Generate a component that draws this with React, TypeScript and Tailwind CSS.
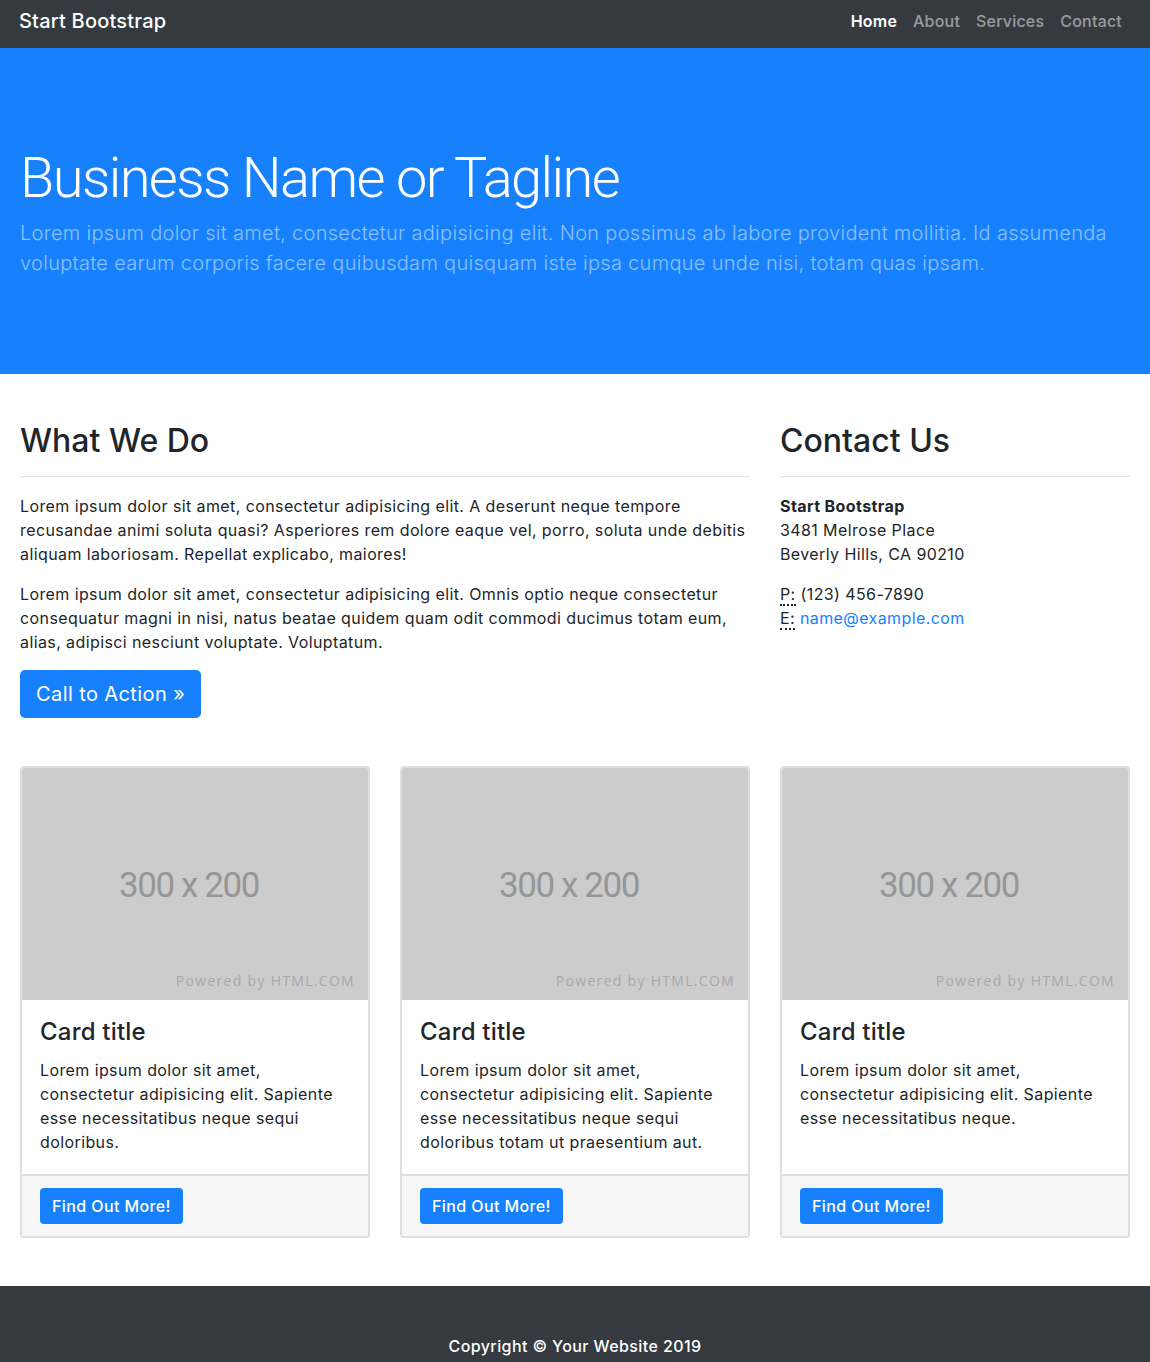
import { } from "react";

const font = { fontFamily: "Inter, 'Noto Sans', sans-serif" };

const cards = [
  "Lorem ipsum dolor sit amet, consectetur adipisicing elit. Sapiente esse necessitatibus neque sequi doloribus.",
  "Lorem ipsum dolor sit amet, consectetur adipisicing elit. Sapiente esse necessitatibus neque sequi doloribus totam ut praesentium aut.",
  "Lorem ipsum dolor sit amet, consectetur adipisicing elit. Sapiente esse necessitatibus neque.",
];

function Placeholder() {
  return (
    <div className="relative h-[232px] bg-[#cccccc] flex items-center justify-center">
      <span className="text-[35px] text-[#969696] font-['Roboto',sans-serif] tracking-[-1.4px] pt-[4px] pr-[12px]">300 x 200</span>
      <span className="absolute right-[13px] bottom-[7px] text-[14px] text-[#a8a8a8] tracking-[1.3px] font-['Open_Sans',sans-serif]">
        Powered by HTML.COM
      </span>
    </div>
  );
}

export default function App() {
  return (
    <div className="min-h-screen bg-white text-[#212529] text-[16px] leading-[24px] tracking-[0.4px]" style={font}>
      <nav className="h-12 bg-[#343a40] flex items-center justify-between px-[19px] pb-[6px]">
        <a className="text-white text-[20px] font-medium tracking-[0.2px]">Start Bootstrap</a>
        <div className="flex items-center gap-[16px] pr-[9px] text-[16px]">
          <a className="text-white font-semibold tracking-[0.2px]">Home</a>
          <a className="text-white/50 font-medium tracking-[0.2px]">About</a>
          <a className="text-white/50 font-medium tracking-[0.2px]">Services</a>
          <a className="text-white/50 font-medium tracking-[0.2px]">Contact</a>
        </div>
      </nav>

      <header className="bg-[#1781fd] h-[326px] px-5 pt-[97px]">
        <h1 className="text-white text-[56px] leading-[67px] font-light tracking-[-1.6px] font-['Roboto',sans-serif]">Business Name or Tagline</h1>
        <p className="mt-[6px] text-white/50 text-[20px] leading-[30px] font-light tracking-[0.3px]">
          Lorem ipsum dolor sit amet, consectetur adipisicing elit. Non possimus ab labore provident mollitia. Id assumenda voluptate earum corporis facere quibusdam quisquam iste ipsa cumque unde nisi, totam quas ipsam.
        </p>
      </header>

      <main className="px-5 pt-[48px] pb-[48px]">
        <div className="flex gap-[30px]">
          <div className="w-[730px]">
            <h2 className="text-[32px] leading-[38px] font-medium tracking-[0px]">What We Do</h2>
            <hr className="mt-[16px] mb-[17px] border-t border-[#e5e5e5]" />
            <p className="mb-4">
              Lorem ipsum dolor sit amet, consectetur adipisicing elit. A deserunt neque tempore recusandae animi soluta quasi? Asperiores rem dolore eaque vel, porro, soluta unde debitis aliquam laboriosam. Repellat explicabo, maiores!
            </p>
            <p className="mb-4">
              Lorem ipsum dolor sit amet, consectetur adipisicing elit. Omnis optio neque consectetur consequatur magni in nisi, natus beatae quidem quam odit commodi ducimus totam eum, alias, adipisci nesciunt voluptate. Voluptatum.
            </p>
            <a className="inline-block bg-[#1781fd] text-white text-[20px] leading-[30px] px-4 py-[9px] rounded-[5px]">Call to Action &raquo;</a>
          </div>
          <div className="w-[350px]">
            <h2 className="text-[32px] leading-[38px] font-medium tracking-[0px]">Contact Us</h2>
            <hr className="mt-[16px] mb-[17px] border-t border-[#e5e5e5]" />
            <address className="not-italic mb-4">
              <strong className="font-bold">Start Bootstrap</strong>
              <br />3481 Melrose Place
              <br />Beverly Hills, CA 90210
            </address>
            <address className="not-italic">
              <abbr title="Phone" className="no-underline border-b-2 border-dotted border-[#212529]">P:</abbr> (123) 456-7890
              <br />
              <abbr title="Email" className="no-underline border-b-2 border-dotted border-[#212529]">E:</abbr>{" "}
              <a className="text-[#1781fd]">name@example.com</a>
            </address>
          </div>
        </div>

        <div className="mt-[48px] grid grid-cols-3 gap-[30px]">
          {cards.map((text, i) => (
            <div key={i} className="flex flex-col border-2 border-[#dedede] rounded-[4px] overflow-hidden">
              <Placeholder />
              <div className="flex-1 px-[18px] pt-[17px] pb-[20px]">
                <h2 className="text-[24px] leading-[29px] font-medium mb-[12px] tracking-[0.2px]">Card title</h2>
                <p>{text}</p>
              </div>
              <div className="bg-[#f6f6f6] border-t-2 border-[#dedede] px-[18px] py-3">
                <a className="inline-block bg-[#1781fd] text-white px-3 py-[6px] rounded-[4px] font-medium">Find Out More!</a>
              </div>
            </div>
          ))}
        </div>
      </main>

      <footer className="bg-[#343a40] py-12">
        <p className="text-center text-white font-medium">Copyright &copy; Your Website 2019</p>
      </footer>
    </div>
  );
}
